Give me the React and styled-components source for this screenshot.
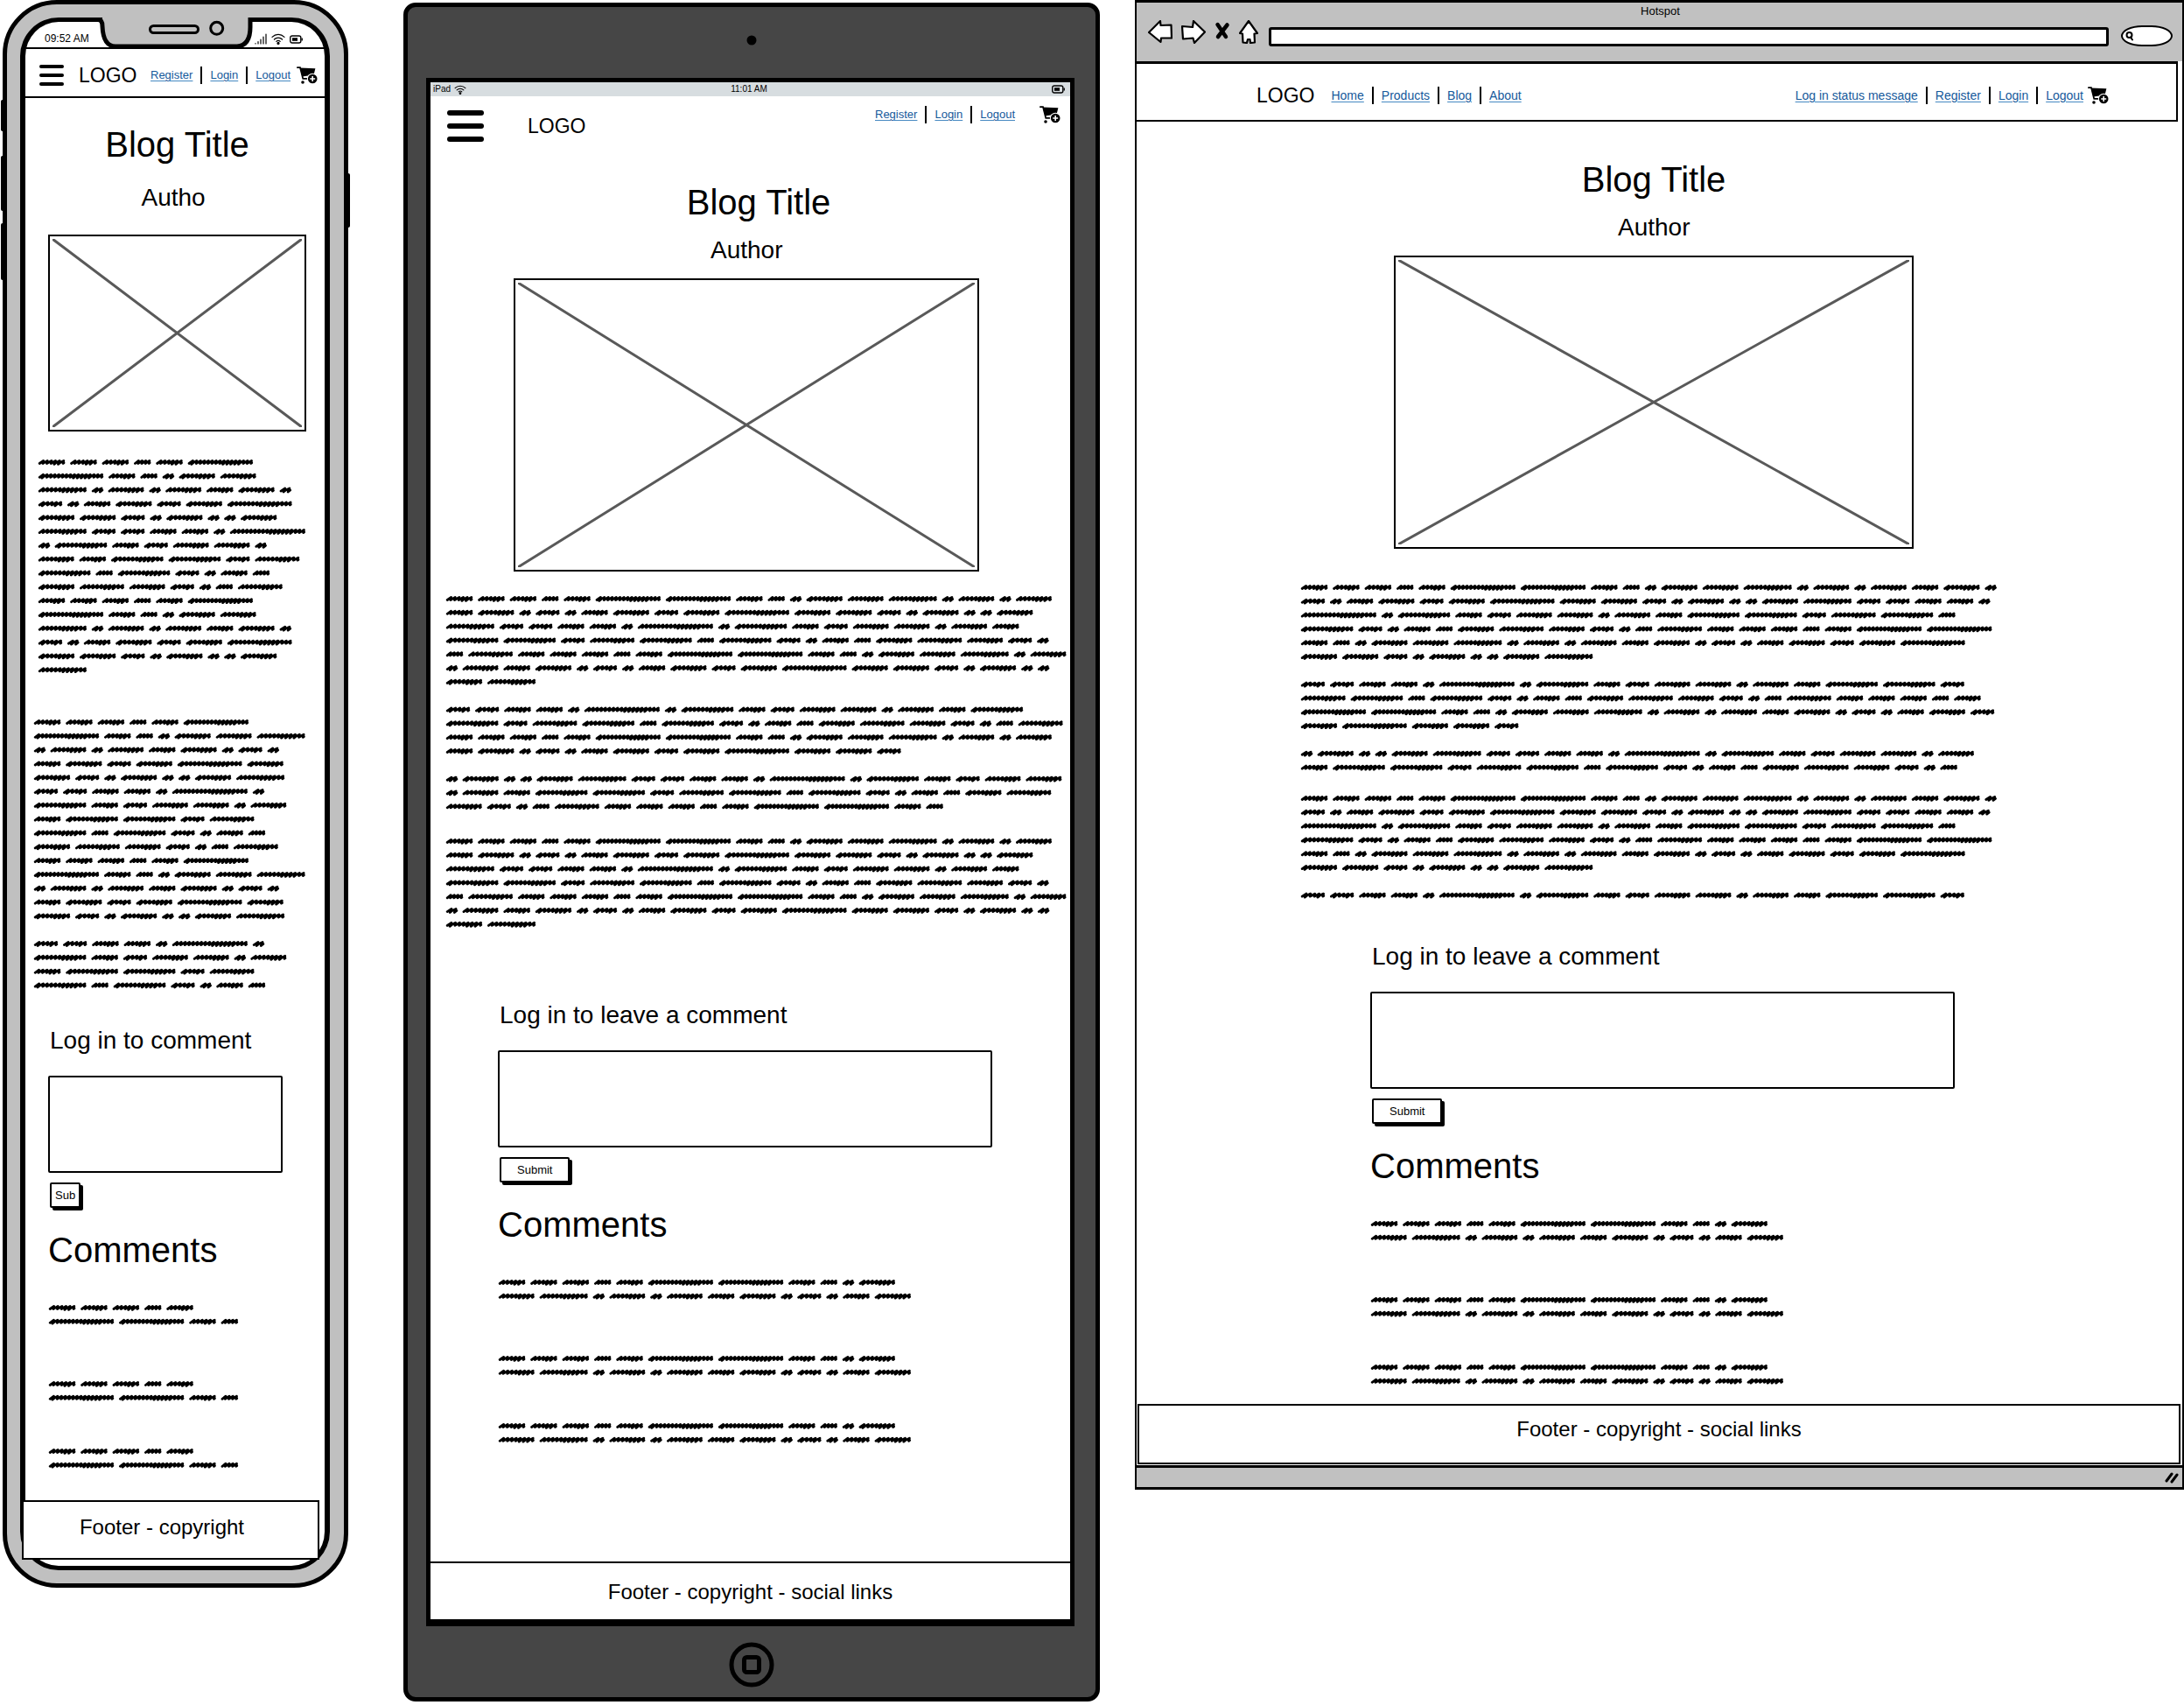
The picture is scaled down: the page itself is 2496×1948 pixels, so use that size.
import React from 'react';
import styled, { createGlobalStyle } from 'styled-components';

const GlobalStyle = createGlobalStyle`
  *, *::before, *::after { box-sizing: border-box; }
  body {
    margin: 0;
    background: #fff;
    color: #000;
    font-family: 'Liberation Sans', Arial, sans-serif;
  }
  h1, h2, h3, p { margin: 0; font-weight: 400; }
  svg { display: block; flex: none; }
`;

/* ---------- greeked text ---------- */

const ADVANCE = {
  A: 36.4, S: 25.3, L: 80.2, T: 18.8, M: 47.2, N: 46.8,
  P: 61, Q: 33.2, R: 79.7, U: 92, V: 65.6, W: 56.8,
};
const WORD_GAP = 5.4;
const PITCH = 15.82;
const HEAVY_START = 'LTMQRV';
const CYCLE =
  'AAASALLASTMNPTNTNAMTQTAMQMRMMQTMTTMPQQAATUTVAQNNTNAVVQWVSVQTASMWNQTSW';

const take = (from, to) => {
  let out = '';
  for (let i = from; i < to; i += 1) out += CYCLE[i % CYCLE.length];
  return out;
};

const wrap = (words, limit) => {
  const lines = [[]];
  let x = 0;
  for (const word of words) {
    const ink = ADVANCE[word] - WORD_GAP;
    if (x + ink > limit) {
      lines.push([]);
      x = 0;
    }
    lines[lines.length - 1].push({ word, x, ink });
    x += ADVANCE[word];
  }
  return lines;
};

const wordPath = ({ word, x, ink }, y) => {
  const left = x + 2.2;
  const right = x + ink - 1;
  const steps = Math.max(2, Math.round((right - left) / 4.6));
  const step = (right - left) / steps;
  const heavyStart = HEAVY_START.includes(word);
  let d = `M${left.toFixed(1)} ${(y + 1.5).toFixed(1)}`;
  for (let i = 0; i < steps; i += 1) {
    const t = i / steps;
    const heavy = (heavyStart && i < 1) || (t > 0.45 && t < 0.8 && word !== 'S');
    const x1 = left + step * (i + 0.95);
    const x2 = left + step * (i + (heavy ? 0.6 : 0.8));
    d += `L${x1.toFixed(1)} ${(y - 1.6).toFixed(1)}`;
    d += `L${x2.toFixed(1)} ${(y + (heavy ? 2.4 : 1.5)).toFixed(1)}`;
    if (heavy) d += `L${(x1 + 0.8).toFixed(1)} ${(y + 0.4).toFixed(1)}`;
  }
  return `${d}L${right.toFixed(1)} ${(y + 0.8).toFixed(1)}`;
};

function Scribble({ paragraphs, limit }) {
  const lines = paragraphs.flatMap((text, i) =>
    i === 0 ? wrap(text, limit) : [[], ...wrap(text, limit)]
  );
  const d = lines
    .map((line, row) => line.map((w) => wordPath(w, 8 + row * PITCH)).join(''))
    .join('');
  return (
    <svg width={limit + 2} height={Math.round(lines.length * PITCH)} aria-hidden="true">
      <path d={d} fill="none" stroke="#000" strokeWidth="2.8" strokeLinecap="round" strokeLinejoin="round" />
    </svg>
  );
}

/* ---------- icons ---------- */

const CartIcon = () => (
  <svg width="24" height="20" viewBox="0 0 24 20">
    <path d="M0.8 1.2H4L7.2 13.8H12" fill="none" stroke="#000" strokeWidth="1.7" strokeLinecap="round" />
    <path d="M3.8 1.6L21.4 2.2L19.6 9.6L6.4 11.6Z" />
    <circle cx="7" cy="18" r="1.8" />
    <circle cx="18.2" cy="14" r="6.3" fill="#fff" />
    <circle cx="18.2" cy="14" r="5.3" />
    <path d="M18.2 11V17M15.2 14H21.2" stroke="#fff" strokeWidth="1.6" />
  </svg>
);

const WifiIcon = ({ size }) => (
  <svg width={size} height={size - 3} viewBox="0 0 16 13" fill="none" stroke="#000" strokeWidth="1.2" strokeLinecap="round">
    <path d="M1 4.4C5 0.4 11 0.4 15 4.4M3.4 7C6 4.4 10 4.4 12.6 7M5.8 9.4C7 8.2 9 8.2 10.2 9.4" />
    <circle cx="8" cy="11.4" r="1" fill="#000" />
  </svg>
);

const BatteryIcon = () => (
  <svg width="15" height="10" viewBox="0 0 15 10">
    <rect x="0.8" y="1" width="12" height="8" rx="2" fill="none" stroke="#000" strokeWidth="1.4" />
    <rect x="3" y="3.2" width="6" height="3.6" />
    <path d="M14.2 3.4V6.6" stroke="#000" strokeWidth="1.4" />
  </svg>
);

const SignalIcon = () => (
  <svg width="14" height="13" viewBox="0 0 14 13" stroke="#000" strokeWidth="1.2" strokeLinecap="round">
    <path d="M1 11.5V12M4 9.5V12M7 7V12M10 4V12M13 1V12" />
  </svg>
);

const Notch = styled.svg`
  position: absolute;
  top: -6px;
  left: 50%;
  transform: translateX(-50%);
`;

const PhoneNotch = () => (
  <Notch width="190" height="37" viewBox="0 0 190 37" aria-hidden="true">
    <rect x="12" y="0" width="170" height="7" fill="#c0c0c0" />
    <path
      d="M3 3.5H7Q12 3.5 12 11Q13 34 27 34H166Q181 33 181 12V3.5H187"
      fill="#c0c0c0"
      stroke="#000"
      strokeWidth="5"
    />
    <rect x="66.5" y="10.5" width="55" height="8" rx="4" fill="#c0c0c0" stroke="#000" strokeWidth="3" />
    <circle cx="142.7" cy="13.3" r="7" fill="#c0c0c0" stroke="#000" strokeWidth="3" />
  </Notch>
);

/* ---------- shared parts ---------- */

const Board = styled.main`
  display: flex;
  align-items: flex-start;
`;

const Slot = styled.section`
  flex: ${(p) => p.$grow} 1 0;
  min-width: 0;
  margin-left: ${(p) => p.$gap || 0}px;
`;

const IconButton = styled.button`
  display: flex;
  padding: 0;
  border: 0;
  background: none;
`;

const MenuButton = styled.button`
  display: flex;
  flex-direction: column;
  gap: ${(p) => p.$gap}px;
  width: ${(p) => p.$width}px;
  padding: 0;
  border: 0;
  background: none;

  span {
    height: ${(p) => p.$bar}px;
    border-radius: 3px;
    background: #000;
  }
`;

const Menu = (props) => (
  <MenuButton type="button" aria-label="Menu" {...props}>
    <span />
    <span />
    <span />
  </MenuButton>
);

const Logo = styled.span`
  font-size: 23px;
  line-height: 28px;
`;

const Links = styled.nav`
  display: flex;
  align-items: center;
  font-size: ${(p) => p.$size}px;
  line-height: 20px;
  white-space: nowrap;
`;

const NavLink = styled.a`
  color: #15599b;
  text-decoration: underline;
  text-decoration-color: #4689c2;
  text-decoration-thickness: 1px;
  text-underline-offset: 2px;

  & + & {
    display: flex;
  }
  & + &::before {
    content: '';
    width: 2px;
    height: 20px;
    margin: 0 9px;
    background: #000;
  }
`;

const LinkList = ({ items, size }) => (
  <Links $size={size}>
    {items.map((item) => (
      <NavLink key={item} href="#">{item}</NavLink>
    ))}
  </Links>
);

const Cart = () => (
  <IconButton type="button" aria-label="Add to cart">
    <CartIcon />
  </IconButton>
);

const Account = styled.div`
  display: flex;
  align-items: center;
  gap: ${(p) => p.$gap}px;
  margin-left: auto;
`;

const ArticleHead = styled.header`
  display: flex;
  flex-direction: column;
  align-items: center;
  padding: ${(p) => p.$padding};
`;

const Title = styled.h1`
  font-size: 40px;
  line-height: 48px;
  padding-left: ${(p) => p.$inset || 0}px;
`;

const Author = styled.p`
  width: 82px;
  margin-top: ${(p) => p.$gap}px;
  font-size: 28px;
  line-height: 32px;
`;

const Picture = styled.div`
  align-self: stretch;
  height: ${(p) => p.$height}px;
  margin-top: ${(p) => p.$gap}px;
  padding: 3px;
  border: 2px solid #000;

  svg { width: 100%; height: 100%; }
`;

const Placeholder = (props) => (
  <Picture {...props}>
    <svg viewBox="0 0 100 100" preserveAspectRatio="none" role="img" aria-label="Image placeholder">
      <path d="M0 0L100 100M100 0L0 100" stroke="#595959" strokeWidth="3" vectorEffect="non-scaling-stroke" />
    </svg>
  </Picture>
);

const Copy = styled.div`
  padding: ${(p) => p.$padding};
`;

const CommentArea = styled.section`
  display: flex;
  flex-direction: column;
  align-items: flex-start;
  padding: ${(p) => p.$padding};
`;

const FieldLabel = styled.label`
  padding-left: 2px;
  font-size: 28px;
  line-height: 34px;
  white-space: nowrap;
`;

const Field = styled.textarea`
  width: 100%;
  height: 111px;
  margin: 23px 0 11px;
  border: 2px solid #000;
  border-radius: 2px;
  background: #fff;
  resize: none;
`;

const Submit = styled.button`
  height: 29px;
  margin: 0 0 24px 2px;
  padding: 0 ${(p) => p.$pad}px;
  border: 2px solid #000;
  border-radius: 2px;
  background: #fff;
  box-shadow: 3px 3px 0 #000;
  color: #000;
  font: 13px/20px 'Liberation Sans', Arial, sans-serif;
`;

const CommentsTitle = styled.h2`
  margin-bottom: 34px;
  font-size: 40px;
  line-height: 48px;
`;

const CommentList = styled.div`
  display: flex;
  flex-direction: column;
  gap: 55px;
`;

const LastComment = styled.div`
  margin-top: 45px;
`;

function CommentSection({ id, label, button, buttonPad, padding, words, limit }) {
  return (
    <CommentArea $padding={padding}>
      <FieldLabel htmlFor={id}>{label}</FieldLabel>
      <Field id={id} />
      <Submit type="button" $pad={buttonPad}>{button}</Submit>
      <CommentsTitle>Comments</CommentsTitle>
      <CommentList>
        <Scribble paragraphs={[words]} limit={limit} />
        <Scribble paragraphs={[words]} limit={limit} />
      </CommentList>
      <LastComment>
        <Scribble paragraphs={[words]} limit={limit} />
      </LastComment>
    </CommentArea>
  );
}

const Footer = styled.footer`
  display: flex;
  justify-content: center;
  margin: ${(p) => p.$margin};
  padding: ${(p) => p.$padding};
  border: 2px solid #000;
  background: #fff;
  font-size: 24px;
  line-height: 32px;
`;

/* ---------- phone ---------- */

const PhoneFrame = styled.div`
  position: relative;
  margin-left: 3px;
  padding: 15px 16px 15px 15px;
  border: 5px solid #000;
  border-radius: 62px;
  background: #c0c0c0;
`;

const SideButton = styled.span`
  position: absolute;
  top: ${(p) => p.$top}px;
  ${(p) => p.$side}: -7px;
  width: 6px;
  height: ${(p) => p.$height}px;
  border-radius: 2px;
  background: #000;
`;

const PhoneScreen = styled.div`
  position: relative;
  padding-bottom: 7px;
  border: solid #000;
  border-width: 5px 6px;
  border-radius: 44px;
  background: #fff;
`;

const PhoneStatus = styled.div`
  display: flex;
  align-items: flex-end;
  justify-content: space-between;
  height: 29px;
  padding: 0 25px 3px 22px;
  font-size: 12px;
  line-height: 14px;
`;

const StatusIcons = styled.span`
  display: flex;
  align-items: center;
  gap: 5px;
`;

const PhoneBar = styled.div`
  display: flex;
  align-items: center;
  height: 58px;
  padding: 6px 8px 0 16px;
  border: solid #000;
  border-width: 2px 0;
  margin-bottom: 29px;

  ${Logo} { margin-left: 17px; }
`;

const PhoneSpacer = styled.div`
  height: 44px;
`;

function Phone() {
  return (
    <PhoneFrame>
      <SideButton $side="left" $top={109} $height={36} />
      <SideButton $side="left" $top={173} $height={63} />
      <SideButton $side="left" $top={250} $height={65} />
      <SideButton $side="right" $top={193} $height={62} />
      <PhoneScreen>
        <PhoneNotch />
        <PhoneStatus>
          <span>09:52 AM</span>
          <StatusIcons>
            <SignalIcon />
            <WifiIcon size={16} />
            <BatteryIcon />
          </StatusIcons>
        </PhoneStatus>
        <PhoneBar>
          <Menu $width={28} $bar={4} $gap={6} />
          <Logo>LOGO</Logo>
          <Account $gap={7}>
            <LinkList items={['Register', 'Login', 'Logout']} size={13} />
            <Cart />
          </Account>
        </PhoneBar>
        <ArticleHead $padding="0 21px 27px 26px">
          <Title>Blog Title</Title>
          <Author $gap={21}>Autho</Author>
          <Placeholder $gap={26} $height={225} />
        </ArticleHead>
        <Copy $padding="0 0 0 14px">
          <Scribble paragraphs={[take(0, 105)]} limit={307} />
        </Copy>
        <PhoneSpacer />
        <Copy $padding="0 0 39px 9px">
          <Scribble paragraphs={[take(0, 105), take(36, 62)]} limit={311} />
        </Copy>
        <CommentSection
          id="phone-comment"
          label="Log in to comment"
          button="Sub"
          buttonPad={4}
          padding="0 48px 32px 26px"
          words={take(0, 9)}
          limit={226}
        />
        <Footer $margin="0 6px 0 -4px" $padding="13px 20px 19px 0">Footer - copyright</Footer>
      </PhoneScreen>
    </PhoneFrame>
  );
}

/* ---------- tablet ---------- */

const TabletFrame = styled.div`
  margin-top: 3px;
  padding: 0 24px 0 21px;
  border: 5px solid #000;
  border-radius: 14px;
  background: #464646;
`;

const Camera = styled.div`
  display: flex;
  align-items: center;
  justify-content: center;
  height: 81px;
  padding: 0 0 5px 3px;
`;

const TabletScreen = styled.div`
  border: solid #000;
  border-width: 5px 5px 6px;
  background: #fff;
`;

const TabletStatus = styled.div`
  display: grid;
  grid-template-columns: 1fr auto 1fr;
  align-items: center;
  height: 16px;
  padding: 0 6px 0 3px;
  background: #d7dde0;
  font-size: 10px;
  line-height: 16px;
`;

const Carrier = styled.span`
  display: flex;
  align-items: center;
  gap: 4px;
`;

const StatusEnd = styled.span`
  display: flex;
  justify-content: flex-end;
`;

const TabletBar = styled.div`
  display: flex;
  align-items: flex-start;
  padding: 11px 11px 0 19px;
  margin-bottom: 45px;
`;

const Brand = styled.div`
  display: flex;
  align-items: center;
  gap: 50px;
  padding-top: 5px;
`;

const HomeArea = styled.div`
  display: flex;
  align-items: center;
  justify-content: center;
  height: 81px;
  padding: 6px 0 0 3px;
`;

function Tablet() {
  return (
    <TabletFrame>
      <Camera>
        <svg width="12" height="12"><circle cx="6" cy="6" r="5.5" /></svg>
      </Camera>
      <TabletScreen>
        <TabletStatus>
          <Carrier>iPad <WifiIcon size={14} /></Carrier>
          <span>11:01 AM</span>
          <StatusEnd><BatteryIcon /></StatusEnd>
        </TabletStatus>
        <TabletBar>
          <Brand>
            <Menu $width={42} $bar={6} $gap={9} />
            <Logo>LOGO</Logo>
          </Brand>
          <Account $gap={28}>
            <LinkList items={['Register', 'Login', 'Logout']} size={13} />
            <Cart />
          </Account>
        </TabletBar>
        <ArticleHead $padding="0 104px 23px 95px">
          <Title $inset={28}>Blog Title</Title>
          <Author $gap={15}>Author</Author>
          <Placeholder $gap={16} $height={335} />
        </ArticleHead>
        <Copy $padding="0 0 24px 17px">
          <Scribble paragraphs={[take(0, 105), take(36, 99), take(30, 78)]} limit={712} />
        </Copy>
        <Copy $padding="0 0 79px 17px">
          <Scribble paragraphs={[take(0, 105)]} limit={712} />
        </Copy>
        <CommentSection
          id="tablet-comment"
          label="Log in to leave a comment"
          button="Submit"
          buttonPad={18}
          padding="0 89px 131px 77px"
          words={take(0, 24)}
          limit={476}
        />
        <Footer $margin="0 -2px" $padding="17px 0 15px">Footer - copyright - social links</Footer>
      </TabletScreen>
      <HomeArea>
        <IconButton type="button" aria-label="Home">
          <svg width="54" height="52" viewBox="0 0 54 52" fill="none" stroke="#000" strokeWidth="5">
            <circle cx="27" cy="26" r="23" />
            <rect x="18.5" y="17.5" width="17" height="17" rx="3" />
          </svg>
        </IconButton>
      </HomeArea>
    </TabletFrame>
  );
}

/* ---------- browser ---------- */

const BrowserFrame = styled.div`
  border: 3px solid #000;
  border-width: 3px 2px;
  padding-left: 1px;
  background: #fff;
`;

const Toolbar = styled.div`
  height: 67px;
  margin-left: -1px;
  padding: 2px 11px 0 13px;
  background: #c1c1c1;
`;

const WindowTitle = styled.div`
  text-align: center;
  font-size: 13px;
  line-height: 16px;
`;

const Controls = styled.div`
  display: flex;
  align-items: flex-end;
  gap: 10px;
  height: 32px;

  ${IconButton} { align-self: flex-start; padding-top: 2px; }
`;

const Address = styled.input`
  flex: 1;
  min-width: 0;
  height: 22px;
  margin: 0 4px 0 2px;
  border: 3px solid #000;
  border-radius: 3px;
  background: #fff;
`;

const SearchBox = styled.label`
  display: flex;
  align-items: center;
  width: 59px;
  height: 24px;
  padding-left: 3px;
  border: 2px solid #000;
  border-radius: 24px / 12px;
  background: #fff;
`;

const SearchInput = styled.input`
  width: 36px;
  padding: 0;
  border: 0;
  background: none;
`;

const BrowserBar = styled.div`
  display: flex;
  align-items: center;
  height: 69px;
  margin: 0 5px 42px -3px;
  padding: 7px 77px 0 137px;
  border: solid #000;
  border-width: 3px 2px 2px;

  ${Logo} { margin-right: 19px; }
`;

const BottomBar = styled.div`
  display: flex;
  align-items: center;
  justify-content: flex-end;
  height: 25px;
  margin: 1px 0 0 -1px;
  padding-right: 4px;
  border-top: 3px solid #000;
  background: #c1c1c1;
`;

const ToolIcon = ({ label, width, d, solid }) => (
  <IconButton type="button" aria-label={label}>
    <svg width={width} height="27" viewBox={`0 0 ${width} 27`}>
      <path
        d={d}
        fill={solid ? 'none' : '#fff'}
        stroke="#000"
        strokeWidth={solid ? 4.5 : 2.2}
        strokeLinejoin="round"
        strokeLinecap="round"
      />
    </svg>
  </IconButton>
);

function Browser() {
  return (
    <BrowserFrame>
      <Toolbar>
        <WindowTitle>Hotspot</WindowTitle>
        <Controls>
          <ToolIcon label="Back" width={28} d="M1 14L14 1L14.5 6L26.5 5.5L27 20.5L15 20.5L14.5 25Z" />
          <ToolIcon label="Forward" width={28} d="M1 7L13 8L14 1L27 13.5L15 26L13.5 20.5L2 21.5Z" />
          <ToolIcon label="Stop" width={18} solid d="M3.5 5L13 19M14.5 5.5L4 19" />
          <ToolIcon label="Home page" width={22} d="M11 1L21 15L17.5 15.5L18 25.5L13 26L12.5 22L10 22L9 26L4.5 25.5L4 15.5L1 15Z" />
          <Address type="text" aria-label="Address" />
          <SearchBox>
            <svg width="9" height="11" viewBox="0 0 9 11" fill="none" stroke="#000" strokeWidth="2" strokeLinecap="round">
              <circle cx="4.5" cy="4" r="3" />
              <path d="M6 6.5L8 9.5" />
            </svg>
            <SearchInput type="text" aria-label="Search" />
          </SearchBox>
        </Controls>
      </Toolbar>
      <BrowserBar>
        <Logo>LOGO</Logo>
        <LinkList items={['Home', 'Products', 'Blog', 'About']} size={14} />
        <Account $gap={5}>
          <LinkList items={['Log in status message', 'Register', 'Login', 'Logout']} size={14} />
          <Cart />
        </Account>
      </BrowserBar>
      <ArticleHead $padding="0 307px 36px 293px">
        <Title>Blog Title</Title>
        <Author $gap={15}>Author</Author>
        <Placeholder $gap={16} $height={335} />
      </ArticleHead>
      <Copy $padding="0 0 20px 186px">
        <Scribble paragraphs={[take(0, 105), take(36, 99), take(30, 68)]} limit={800} />
      </Copy>
      <Copy $padding="0 0 45px 186px">
        <Scribble paragraphs={[take(0, 105), take(36, 54)]} limit={800} />
      </Copy>
      <CommentSection
        id="browser-comment"
        label="Log in to leave a comment"
        button="Submit"
        buttonPad={18}
        padding="0 260px 18px 266px"
        words={take(0, 24)}
        limit={476}
      />
      <Footer $margin="0 2px 0 0" $padding="11px 0 22px">Footer - copyright - social links</Footer>
      <BottomBar>
        <svg width="16" height="14" viewBox="0 0 16 14" stroke="#000" strokeWidth="3" strokeLinecap="round">
          <path d="M2 11L8 3M8 12L14 4" />
        </svg>
      </BottomBar>
    </BrowserFrame>
  );
}

export default function App() {
  return (
    <>
      <GlobalStyle />
      <Board>
        <Slot $grow={398}><Phone /></Slot>
        <Slot $grow={796} $gap={63}><Tablet /></Slot>
        <Slot $grow={1199} $gap={40}><Browser /></Slot>
      </Board>
    </>
  );
}
